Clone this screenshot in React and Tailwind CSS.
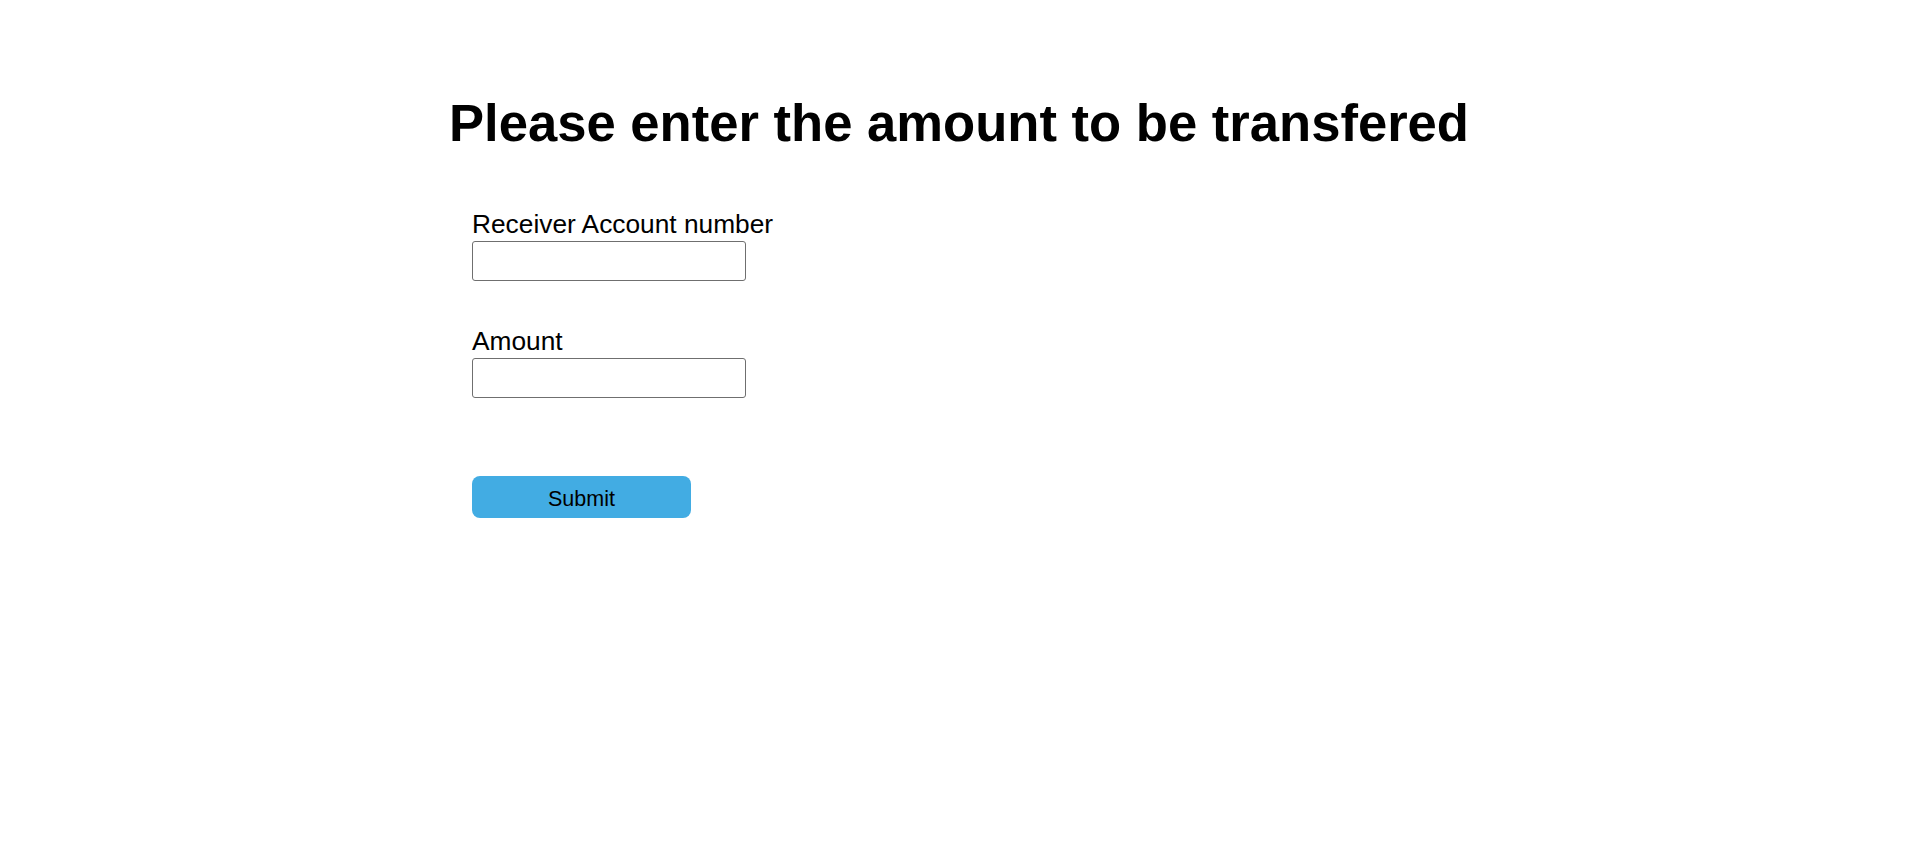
export default function App() {
  return (
    <div className="min-h-screen bg-white text-black font-['Liberation_Sans',Arial,sans-serif]">
      <h1 className="pt-[93px] text-center text-[52.6px] leading-[60px] font-bold">
        Please enter the amount to be transfered
      </h1>

      <form className="ml-[472px] mt-[56px] flex flex-col" onSubmit={(e) => e.preventDefault()}>
        <label className="text-[26.3px] leading-[30px]">Receiver Account number</label>
        <input
          type="text"
          className="mt-[2px] w-[274px] h-[40px] border border-[#6f6f6f] rounded-[3px] px-2 text-[20px] outline-none"
        />

        <label className="mt-[45px] text-[26.3px] leading-[30px]">Amount</label>
        <input
          type="text"
          className="mt-[2px] w-[274px] h-[40px] border border-[#6f6f6f] rounded-[3px] px-2 text-[20px] outline-none"
        />

        <button
          type="submit"
          className="mt-[78px] w-[219px] h-[42px] pt-[4px] rounded-[8px] bg-[#42ace3] text-[21.5px] text-black"
        >
          Submit
        </button>
      </form>
    </div>
  );
}
